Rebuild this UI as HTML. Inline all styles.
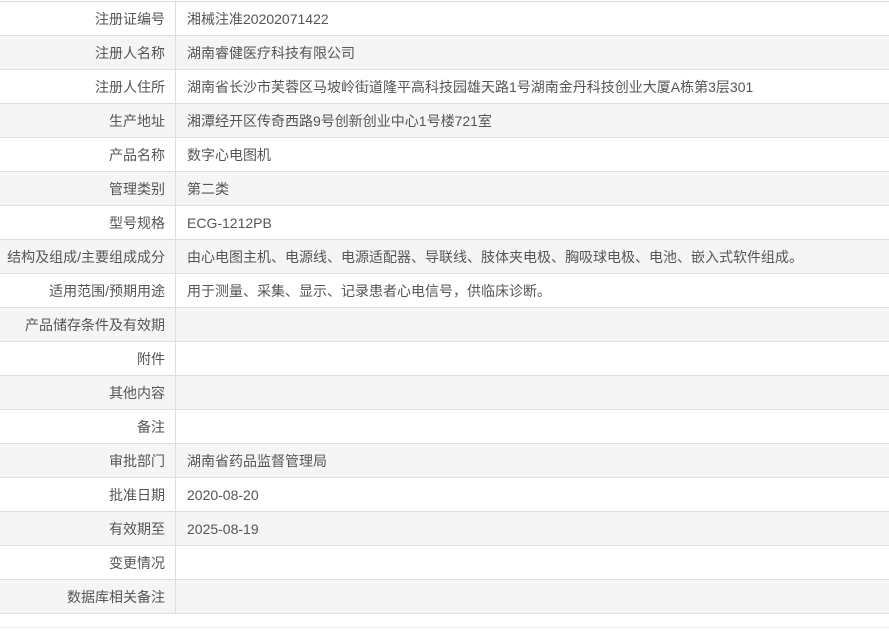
<!DOCTYPE html><html><head><meta charset="utf-8"><style>
body{margin:0;background:#fff;font-family:"Liberation Sans","Noto Sans CJK SC",sans-serif;font-size:14px;color:#555}
table{position:absolute;top:1px;left:0;width:889px;border-collapse:collapse}
td{height:33px;border-top:1px solid #ddd;border-bottom:1px solid #ddd;padding:0;white-space:nowrap}
td.l{width:165px;text-align:right;padding-right:10px;border-right:1px solid #ddd}
td.v{padding-left:11px}
tr:nth-child(even) td{background:#f5f5f5}
.b{position:absolute;top:627px;left:0;width:889px;border-top:1px solid #eee}
</style></head><body>
<table>
<tr><td class="l">注册证编号</td><td class="v">湘械注准20202071422</td></tr>
<tr><td class="l">注册人名称</td><td class="v">湖南睿健医疗科技有限公司</td></tr>
<tr><td class="l">注册人住所</td><td class="v">湖南省长沙市芙蓉区马坡岭街道隆平高科技园雄天路1号湖南金丹科技创业大厦A栋第3层301</td></tr>
<tr><td class="l">生产地址</td><td class="v">湘潭经开区传奇西路9号创新创业中心1号楼721室</td></tr>
<tr><td class="l">产品名称</td><td class="v">数字心电图机</td></tr>
<tr><td class="l">管理类别</td><td class="v">第二类</td></tr>
<tr><td class="l">型号规格</td><td class="v">ECG-1212PB</td></tr>
<tr><td class="l">结构及组成/主要组成成分</td><td class="v">由心电图主机、电源线、电源适配器、导联线、肢体夹电极、胸吸球电极、电池、嵌入式软件组成。</td></tr>
<tr><td class="l">适用范围/预期用途</td><td class="v">用于测量、采集、显示、记录患者心电信号，供临床诊断。</td></tr>
<tr><td class="l">产品储存条件及有效期</td><td class="v"></td></tr>
<tr><td class="l">附件</td><td class="v"></td></tr>
<tr><td class="l">其他内容</td><td class="v"></td></tr>
<tr><td class="l">备注</td><td class="v"></td></tr>
<tr><td class="l">审批部门</td><td class="v">湖南省药品监督管理局</td></tr>
<tr><td class="l">批准日期</td><td class="v">2020-08-20</td></tr>
<tr><td class="l">有效期至</td><td class="v">2025-08-19</td></tr>
<tr><td class="l">变更情况</td><td class="v"></td></tr>
<tr><td class="l">数据库相关备注</td><td class="v"></td></tr>
</table>
<div class="b"></div>
</body></html>
